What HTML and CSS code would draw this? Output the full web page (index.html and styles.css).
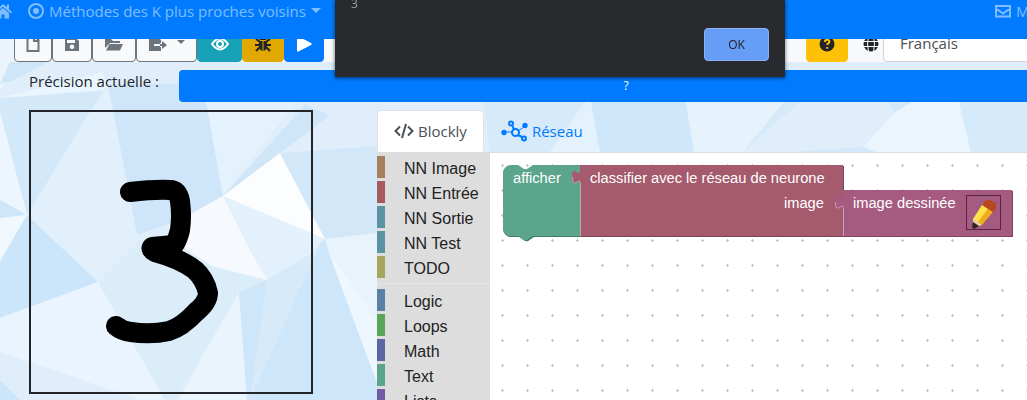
FILE: index.html
```
<!DOCTYPE html>
<html lang="fr">
<head>
<meta charset="utf-8">
<title>Méthodes des K plus proches voisins</title>
<link rel="stylesheet" href="styles.css">
</head>
<body>
<svg class="backdrop" viewBox="0 0 1027 400" preserveAspectRatio="xMinYMin slice" aria-hidden="true">
  <path fill="#dfeefa" d="M0 0h1027v400H0z"/>
  <path fill="#e9f4fd" d="M0 39h60L20 62 0 90z"/>
  <path fill="#cfe6f8" d="M10 62h38L14 80 0 84z"/>
  <path fill="#d3e9f9" d="M0 98 110 90 100 105 27 215 0 112z"/>
  <path fill="#eaf5fd" d="M0 98 102 72 107 84 104 90z"/>
  <path fill="#edf6fe" d="M0 112 27 215 0 200z"/>
  <path fill="#cde6fa" d="M0 200 27 215 0 218z"/>
  <path fill="#f0f8fe" d="M0 218 27 215 0 262z"/>
  <path fill="#cbe5fa" d="M27 215 98 282 0 318V262z"/>
  <path fill="#e1f0fb" d="M107 84 27 215 98 282 150 250z"/>
  <path fill="#cfe6fa" d="M108 84H203L223 196 188 217 137 235z"/>
  <path fill="#e4f2fd" d="M203 84H310L223 196z"/>
  <path fill="#cfe6f8" d="M223 196 305 105 330 115 280 153z"/>
  <path fill="#dcedfa" d="M98 282 140 240 212 266 267 280 239 292 175 400H165z"/>
  <path fill="#f6fafe" d="M180 220 223 196 250 250 267 280 212 266 180 245z"/>
  <path fill="#e3f1fc" d="M223 196 325 239 267 280 250 250z"/>
  <path fill="#fbfdff" d="M223 196 280 153 325 239z"/>
  <path fill="#d2e8f9" d="M280 153 377 146V233L325 239z"/>
  <path fill="#e8f3fc" d="M325 239 377 233V320L328 250z"/>
  <path fill="#eaf4fe" d="M98 282 0 318V352L140 400H165z"/>
  <path fill="#dfeefa" d="M0 352 140 400H50L0 365z"/>
  <path fill="#cbe5fa" d="M0 380 20 400H0z"/>
  <path fill="#e9f4fd" d="M239 292 247 400H178z"/>
  <path fill="#cde6fa" d="M239 292 267 280 325 239 328 250 377 383V400H247z"/>
  <path fill="#d7eafa" d="M267 280 320 245 250 400z"/>
  <path fill="#e4f2fc" d="M267 280 325 239 310 254z"/>
  <path fill="#eef6fe" d="M328 250 377 320V383z"/>
  <path fill="#d6eafa" d="M484 102H585L550 152H490z"/>
  <path fill="#e4f2fd" d="M550 152 585 102H591L600 152z"/>
  <path fill="#cfe7fa" d="M591 102H686L694 152H600z"/>
  <path fill="#e6f3fd" d="M686 102H784L743 152H694z"/>
  <path fill="#d6eafa" d="M784 102H800L743 152z"/>
  <path fill="#d3e8f9" d="M888 102H912L894 113zM790 152 862 147 876 152z"/>
  <path fill="#eaf5fe" d="M912 102H959L971 152H876L863 147 894 113z"/>
  <path fill="#d5eafb" d="M959 102H1027V152H971z"/>
</svg>

<nav class="navbar">
  <a class="nav-link" href="#" aria-label="Accueil"><svg class="icon home" viewBox="0 0 18 16"><path d="M9 1 0 9l1 1.400L9 3.700l8 6.700L18 9l-3-2.700V1.500h-2.200v2.800zM9 5 3 10v5.500h4.500v-4h3v4H15V10z"/></svg></a>
  <a class="nav-link topic" href="#"><svg class="icon" viewBox="0 0 16 16"><circle class="ring" cx="8" cy="8" r="7"/><circle cx="8" cy="8" r="3"/></svg><span>Méthodes des K plus proches voisins</span><span class="caret"></span></a>
  <a class="nav-link mail" href="#"><svg class="icon" viewBox="0 0 16 16"><path class="ring" d="M1 3h14v10.500H1zM1 5.500l7 5 7-5"/></svg><span>M</span></a>
</nav>

<main class="page">
  <div class="toolbar">
    <div class="tools">
      <button class="btn w-new" aria-label="Nouveau"><svg class="icon" viewBox="0 0 16 16"><path class="ring" d="M2.500 0h7l4 4v11h-11zM9 0v5h4"/></svg></button>
      <button class="btn w-save" aria-label="Enregistrer"><svg class="icon" viewBox="0 0 16 16"><path fill-rule="evenodd" d="M1 2h11l3 3v10H1zM3 4v3h8V4zM8 8.500a2.300 2.300 0 1 0 .01 0z"/></svg></button>
      <button class="btn w-open" aria-label="Ouvrir"><svg class="icon wide" viewBox="0 0 18 16"><path d="M0 12V3h6l2 2h7v2H5zM4.500 8H18l-3 6.500H1z"/></svg></button>
      <button class="btn w-export" aria-label="Exporter"><svg class="icon wide" viewBox="0 0 18 16"><path d="M0 0h8l4 4v3h-1v1H5v2h6v1h1v4H0zM13 5l5 4-5 4v-3h-2V8h2z"/></svg><span class="caret"></span></button>
      <button class="btn info" aria-label="Aperçu"><svg class="icon wide" viewBox="0 0 18 16"><path class="ring" d="M1 8q8-11 16 0-8 11-16 0z"/><circle class="ring" cx="9" cy="8" r="3"/></svg></button>
      <button class="btn debug" aria-label="Déboguer"><svg class="icon" viewBox="0 0 16 16"><path d="M4.500 4a3.500 3.500 0 0 1 7 0zM4 5h3.500v10Q4 14 4 10zM8.500 5H12v5q0 4-3.500 5z"/><path class="ring" d="M1 3l4 3M15 3l-4 3M0 9h5M16 9h-5M1 15l4-4M15 15l-4-4"/></svg></button>
      <button class="btn play" aria-label="Exécuter"><svg class="icon" viewBox="0 0 16 16"><path d="M1 1.500q0-1.500 1.500-1L15 7q1.500 1 0 2L2.500 15.500Q1 16 1 14.500z"/></svg></button>
    </div>
    <div class="language">
      <button class="btn help" aria-label="Aide"><svg class="icon" viewBox="0 0 16 16"><circle cx="8" cy="8" r="7.500"/><path class="mark" d="M5.700 6q.5-2.500 2.500-2.300 2.200.2 2.200 2 0 1-1.200 1.700-1 .6-1 1.600M8.200 11v1.800"/></svg></button>
      <label class="globe" for="lang" aria-label="Langue"><svg class="icon" viewBox="0 0 16 16"><circle cx="8" cy="8" r="7.500"/><path class="grid" d="M0 5.500h16M0 10.500h16M5.500 0q-2 8 0 16M10.500 0q2 8 0 16"/></svg></label>
      <select id="lang" class="select"><option>Français</option></select>
    </div>
  </div>

  <div class="precision">
    <span class="precision-label">Précision actuelle :</span>
    <button class="precision-btn">?</button>
  </div>

  <div class="workspace">
    <svg class="drawing" viewBox="0 0 280 280" role="img" aria-label="Chiffre dessiné"><path d="M99 80Q125 77 140 78Q147 79 149 89Q151 104 149 118Q147 127 143 133L121 135Q119 137 124 140Q150 147 164 158Q174 167 177 181Q177 190 165 200Q151 215 138 219Q120 223 100 220Q91 219 85 214"/></svg>
    <section class="editor">
      <div class="tabs">
        <a class="tab active" href="#"><svg class="icon code" viewBox="0 0 20 16"><path class="ring" d="M6 3.500 1.500 8 6 12.500M14 3.500 18.500 8 14 12.500M12 1 8 15"/></svg><span>Blockly</span></a>
        <a class="tab" href="#"><svg class="icon network" viewBox="0 0 27 22"><path class="ring" d="M11.500 6l1.500 3.500M17 15l4 2"/><path class="thin" d="M4 12h7M17 11l6-4"/><circle cx="3" cy="12.500" r="2.700"/><circle cx="24" cy="5.500" r="2.700"/><circle class="ring" cx="10" cy="3.500" r="2"/><circle class="ring" cx="14.500" cy="12.500" r="3.500"/><circle class="ring" cx="23" cy="18.500" r="2"/></svg><span>Réseau</span></a>
      </div>
      <div class="blockly">
        <ul class="toolbox">
          <li class="brown">NN Image</li><li class="red">NN Entrée</li><li class="teal">NN Sortie</li><li class="teal">NN Test</li><li class="olive">TODO</li>
          <li class="separator" role="separator"></li>
          <li class="logic">Logic</li><li class="loops">Loops</li><li class="math">Math</li><li class="text">Text</li><li class="lists">Lists</li>
        </ul>
        <div class="canvas">
          <svg class="blocks" viewBox="1 1 537 248">
            <defs><pattern id="dots" x="0" y="0" width="25" height="25" patternUnits="userSpaceOnUse"><path d="M12 13.500h3M13.500 12v3" stroke="#c4c4c4"/></pattern></defs>
            <rect width="540" height="250" fill="url(#dots)"/>
            <path fill="#427c67" d="M14 21a8 8 0 0 1 8-7h7l6 4h3l6-4h48v71H45l-6 4h-3l-6-4h-8a8 8 0 0 1-8-8z"/>
            <path fill="#5ba58c" d="M14 21a8 8 0 0 1 8-8h7l6 4h3l6-4h48v71H44l-6 4h-3l-6-4h-7a8 8 0 0 1-8-8z"/>
            <path fill="#7c4354" d="M92 14h263v71H92z"/>
            <path fill="#a55b6d" d="M91 13h263v71H91V32c0-9-8 7-8-7s8 2 8-7z"/>
            <path class="shine" stroke="#cea0ab" d="M91.500 84V32c0-9-8 7-8-7"/>
            <path fill="#7c4462" d="M355 39h169v46H355z"/>
            <path fill="#a55b80" d="M354 38h169v46H354V57c0-9-8 7-8-7s8 2 8-7z"/>
            <path class="shine" stroke="#cea0b8" d="M354.500 84V57c0-9-8 7-8-7"/>
            <text x="24" y="31">afficher</text><text x="101" y="31">classifier avec le réseau de neurone</text><text x="295" y="56">image</text><text x="364" y="56">image dessinée</text>
            <rect x="477.500" y="43.500" width="34" height="34" fill="none" stroke="#592444"/>
            <path fill="#3b2836" opacity=".5" d="M484 75 496 70 507 54 507 50 494 70z"/>
            <path fill="#b9481f" d="M496 49q5-3 11 3v4l-3 5-11-7z"/><path fill="#ffe34a" d="M493 53l6 4-10 15-5-5z"/><path fill="#f3ab20" d="M499 57l5 3-11 13-5-2z"/><path fill="#e8cfa0" d="M484 66l9 7-9 3z"/><path fill="#2b211e" d="M484 70l6 4-5 3-2-2z"/>
          </svg>
        </div>
      </div>
    </section>
  </div>
</main>

<div class="dialog" role="dialog" aria-label="Résultat">
  <p class="message">3</p>
  <button class="ok">OK</button>
</div>
</body>
</html>
```

FILE: styles.css
```
* { box-sizing: border-box; }
body { margin: 0; height: 100vh; overflow: hidden; font: 15px/24px "Open Sans", "Noto Sans", sans-serif; color: #212529; }
button, select { font: inherit; }
.backdrop { position: absolute; inset: 0; width: 100%; height: 100%; z-index: -1; }
.icon { width: 16px; height: 16px; flex: none; fill: currentColor; }
.icon.wide { width: 18px; }
.ring { fill: none; stroke: currentColor; stroke-width: 2; }

.navbar { position: fixed; top: 0; left: 0; right: 0; z-index: 2; height: 39px; display: flex; align-items: flex-start; background: #007bff; overflow: hidden; }
.nav-link { display: flex; align-items: center; gap: 5px; height: 21px; color: #80bdff; text-decoration: none; white-space: nowrap; }
.nav-link .home { width: 18px; margin-left: -6px; }
.topic { margin-left: 16px; }
.mail { width: 32px; margin-left: auto; }
.caret { border: 5px solid transparent; border-top-color: currentColor; border-bottom: 0; }

.page { height: 100%; padding-top: 24px; display: flex; flex-direction: column; }
.toolbar { display: flex; justify-content: space-between; margin-left: 14px; background: #f8f9fa; }
.tools, .language { display: flex; }
.btn { display: flex; align-items: center; justify-content: center; gap: 10px; height: 38px; padding: 2px 0 0; border: 1px solid #6c757d; border-radius: 4px; background: #f8f9fa; color: #6c757d; }
.btn .caret { border-width: 4px; border-bottom: 0; margin-top: -4px; }
.w-new { width: 38px; }
.w-save { width: 40px; }
.w-open { width: 44px; }
.w-export { width: 61px; }
.info { width: 45px; background: #17a2b8; border-color: #17a2b8; color: #fff; }
.debug { width: 42px; background: #e0a800; border-color: #e0a800; color: #212529; }
.play { width: 40px; background: #007bff; border-color: #007bff; color: #fff; }
.help { width: 42px; background: #ffc107; border-color: #ffc107; color: #212529; }
.mark { fill: none; stroke: #ffc107; stroke-width: 2; }
.globe { display: flex; align-items: center; padding: 2px 4px 0 15px; }
.grid { fill: none; stroke: #f8f9fa; }
.select { width: 190px; height: 38px; margin-right: -46px; padding: 0 12px; border: 1px solid #ced4da; border-radius: 4px; background: #fff; color: #495057; }

.precision { display: flex; margin: 8px -46px 0 29px; }
.precision-label { width: 150px; line-height: 22px; white-space: nowrap; }
.precision-btn { flex: 1; height: 32px; border: 0; border-radius: 4px; background: #007bff; color: #fff; font-size: 12px; }

.workspace { flex: 1; min-height: 0; display: flex; align-items: flex-start; gap: 64px; margin: 8px 0 0 29px; }
.drawing { flex: none; width: 284px; height: 284px; border: 2px solid #212529; }
.drawing path { fill: none; stroke: #000; stroke-width: 20; stroke-linecap: round; stroke-linejoin: round; }
.editor { flex: 1; min-width: 0; height: 100%; display: flex; flex-direction: column; }
.tabs { display: flex; height: 42px; }
.tab { display: flex; align-items: center; gap: 4px; padding: 0 16px; border: 1px solid transparent; border-radius: 4px 4px 0 0; color: #007bff; text-decoration: none; }
.tab.active { background: #fff; border-color: #dee2e6 #dee2e6 #fff; color: #495057; }
.tab .code { width: 20px; }
.tab .network { width: 27px; height: 22px; }
.thin { fill: none; stroke: currentColor; stroke-width: 1; }
.blockly { flex: 1; min-height: 0; display: flex; overflow: hidden; }
.toolbox { flex: none; width: 113px; margin: 0; padding: 4px 0 0; list-style: none; background: #ddd; font: 16px/26px "Liberation Sans", Arial, sans-serif; color: #222; }
.toolbox li { height: 22px; margin-bottom: 3px; padding-left: 19px; border-left: 8px solid #ddd; white-space: nowrap; }
.toolbox .separator { height: 1px; margin: 5px 0; border: 0; background: #e5e5e5; }
.toolbox .brown { border-color: #a5805b; }
.toolbox .red { border-color: #a55b5b; }
.toolbox .teal { border-color: #5b93a5; }
.toolbox .olive { border-color: #a5a55b; }
.toolbox .logic { border-color: #5b80a5; }
.toolbox .loops { border-color: #5ba55b; }
.toolbox .math { border-color: #5b67a5; }
.toolbox .text { border-color: #5ba58c; }
.toolbox .lists { border-color: #745ba5; }
.canvas { flex: 1; min-width: 0; background: #fff; border-top: 1px solid #ddd; }
.blocks { display: block; width: 537px; height: 248px; }
.blocks text { fill: #fff; font: 11pt "Liberation Sans", Arial, sans-serif; }
.shine { fill: none; }

.dialog { position: absolute; z-index: 3; top: 0; left: 335px; width: 450px; height: 77px; display: flex; flex-direction: column; justify-content: space-between; padding: 0 16px 16px; background: #292a2d; box-shadow: 0 1px 4px #0009; color: #9aa0a6; font-size: 12px; }
.message { margin: 0; line-height: 8px; }
.ok { align-self: flex-end; width: 65px; height: 33px; border: 1px solid #8ab4f8; border-radius: 4px; background: #669df6; color: #202124; font-size: 12px; }
```
